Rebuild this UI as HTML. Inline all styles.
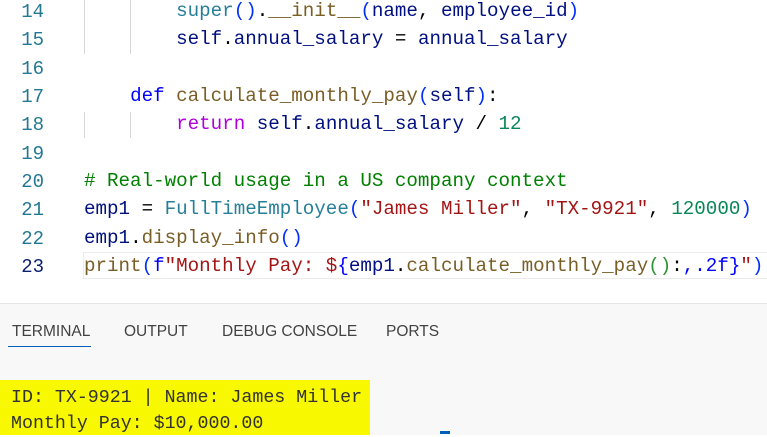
<!DOCTYPE html>
<html><head><style>
body{margin:0;width:767px;height:434px;overflow:hidden;background:#fff;position:relative;font-family:"Liberation Mono",monospace}
.ln{position:absolute;left:0;width:44px;text-align:right;color:#237893;font-size:19px}
.cd{position:absolute;left:84px;font-size:19.2px;white-space:pre;color:#000}
.g{position:absolute;width:1px;background:#d8d8d8}
.k{color:#0000ff}.f{color:#795e26}.c{color:#267f99}.v{color:#001080}.r{color:#af00db}.s{color:#a31515}.n{color:#098658}.m{color:#008000}.b{color:#0431fa}.p{color:#319331}
#panel{position:absolute;left:0;top:303px;width:767px;height:131px;background:#f8f8f8;border-top:1px solid #e5e5e5}
.tab{position:absolute;top:19px;font-family:"Liberation Sans",sans-serif;font-size:15.5px;color:#424242}
</style></head><body>
<div class="g" style="left:84px;top:0;height:54px"></div>
<div class="g" style="left:130px;top:0;height:54px"></div>
<div class="g" style="left:84px;top:112px;height:26px"></div>
<div class="g" style="left:130px;top:112px;height:26px"></div>
<div style="position:absolute;left:83px;top:252px;width:690px;height:27px;border:1px solid #ececec;box-sizing:border-box"></div>
<div class="ln" style="top:1px">14</div><div class="cd" style="top:0px">        <span class="c">super</span><span class="b">()</span>.<span class="f">__init__</span><span class="b">(</span><span class="v">name</span>, <span class="v">employee_id</span><span class="b">)</span></div>
<div class="ln" style="top:29px">15</div><div class="cd" style="top:28px">        <span class="v">self</span>.<span class="v">annual_salary</span> = <span class="v">annual_salary</span></div>
<div class="ln" style="top:58px">16</div>
<div class="ln" style="top:86px">17</div><div class="cd" style="top:85px">    <span class="k">def</span> <span class="f">calculate_monthly_pay</span><span class="b">(</span><span class="v">self</span><span class="b">)</span>:</div>
<div class="ln" style="top:114px">18</div><div class="cd" style="top:113px">        <span class="r">return</span> <span class="v">self</span>.<span class="v">annual_salary</span> / <span class="n">12</span></div>
<div class="ln" style="top:143px">19</div>
<div class="ln" style="top:171px">20</div><div class="cd" style="top:170px"><span class="m"># Real-world usage in a US company context</span></div>
<div class="ln" style="top:199px">21</div><div class="cd" style="top:198px"><span class="v">emp1</span> = <span class="c">FullTimeEmployee</span><span class="b">(</span><span class="s">"James Miller"</span>, <span class="s">"TX-9921"</span>, <span class="n">120000</span><span class="b">)</span></div>
<div class="ln" style="top:228px">22</div><div class="cd" style="top:227px"><span class="v">emp1</span>.<span class="f">display_info</span><span class="b">()</span></div>
<div class="ln" style="top:256px;color:#0b216f">23</div><div class="cd" style="top:255px"><span class="f">print</span><span class="b">(</span><span class="k">f</span><span class="s">"Monthly Pay: $</span><span class="k">{</span><span class="v">emp1</span>.<span class="f">calculate_monthly_pay</span><span class="p">()</span>:<span class="k">,.2f</span><span class="k">}</span><span class="s">"</span><span class="b">)</span></div>
<div id="panel">
<div class="tab" style="left:12px">TERMINAL</div>
<div style="position:absolute;left:8px;top:42px;width:83px;height:1px;background:#005fb8"></div>
<div class="tab" style="left:124px">OUTPUT</div>
<div class="tab" style="left:222px">DEBUG CONSOLE</div>
<div class="tab" style="left:386px">PORTS</div>
<div style="position:absolute;left:0;top:76px;width:370px;height:55px;background:#f8f800"></div>
<div style="position:absolute;left:11px;top:81px;font-size:18.3px;color:#333;white-space:pre;line-height:26px">ID: TX-9921 | Name: James Miller
Monthly Pay: $10,000.00</div>
<div style="position:absolute;left:440px;top:127px;width:10px;height:3px;background:#005fb8"></div>
</div>
</body></html>
